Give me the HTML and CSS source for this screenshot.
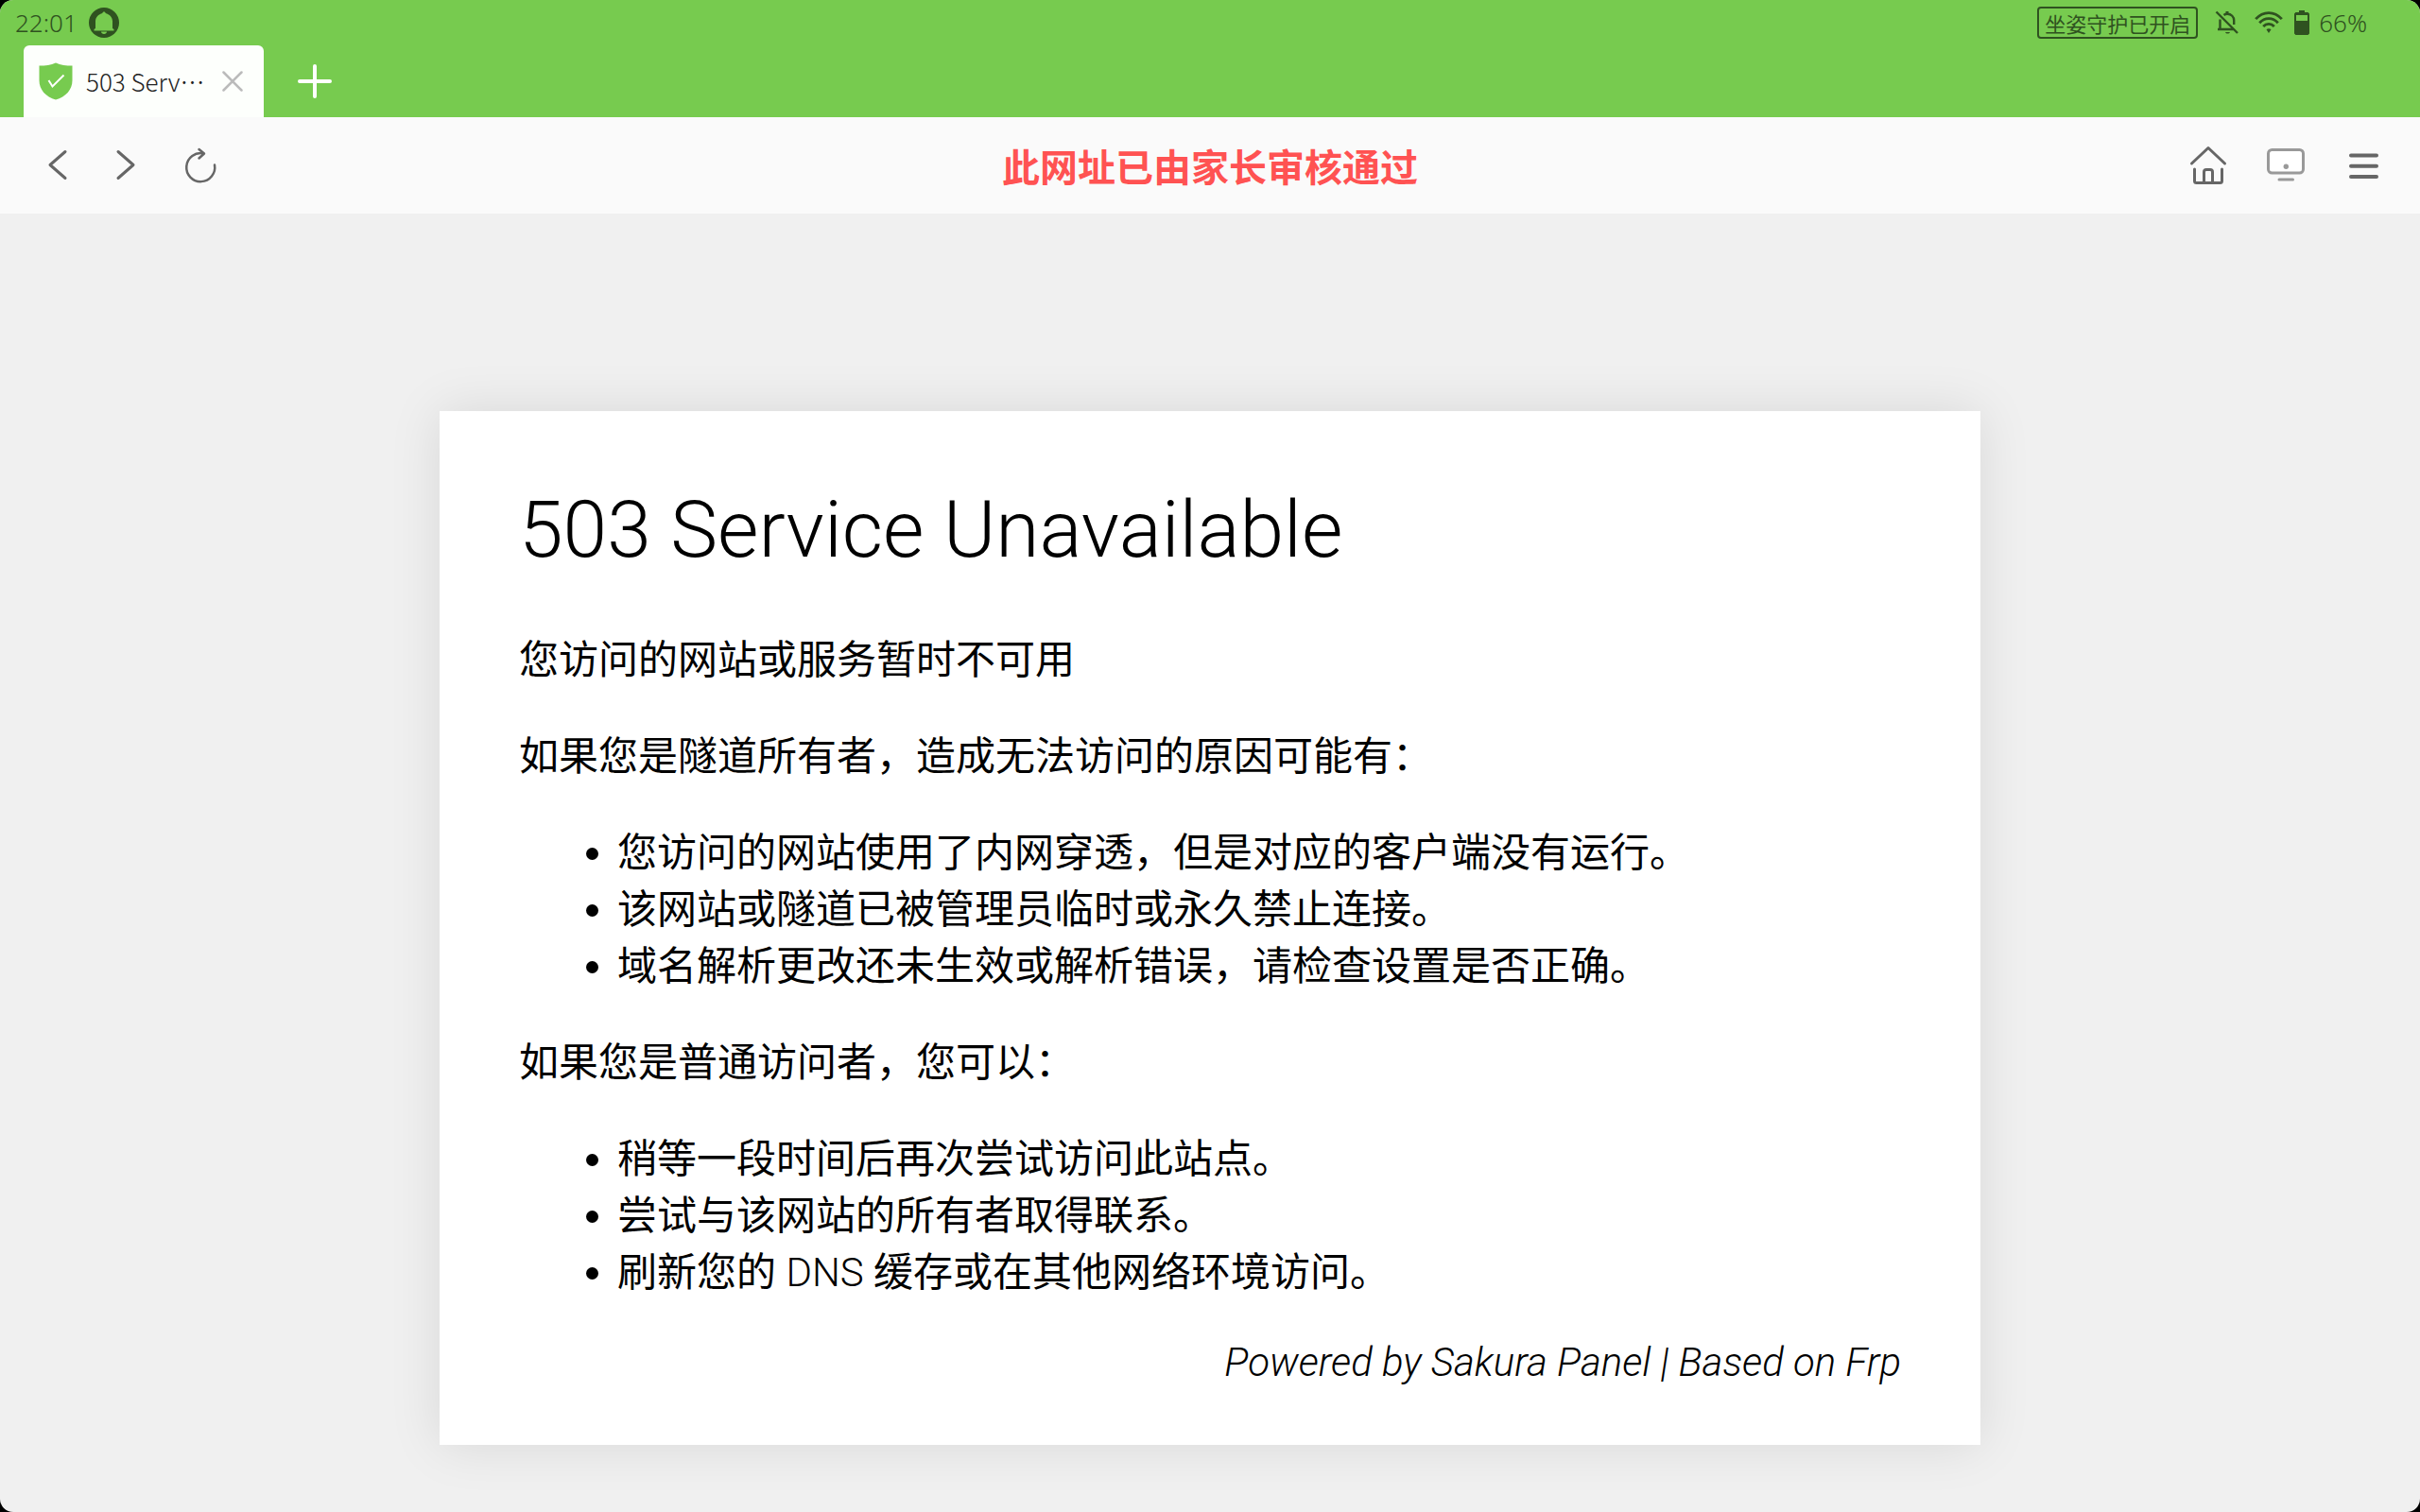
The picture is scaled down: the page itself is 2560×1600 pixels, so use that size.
FILE: index.html
```html
<!DOCTYPE html>
<html lang="zh-CN">
<head>
  <meta charset="UTF-8">
  <meta name="viewport" content="width=device-width, initial-scale=1.0">
  <title>503 Service Unavailable</title>
  <link rel="stylesheet" href="styles.css">
</head>
<body>
  <div class="screen">
    <!-- Status bar -->
    <div class="status-bar">
      <span class="time">22:01</span>
      <svg class="notice-icon" width="32" height="32" viewBox="0 0 32 32">
        <circle cx="16" cy="16" r="16" fill="#2f5220"/>
        <path d="M16 4.500c1 0 1.600.6 1.600 1.400 4.200 1 7.400 4.200 7.400 8.600v7.500l1.500 1V24.500h-21V23l1.500-1v-7.500c0-4.400 3.200-7.600 7.400-8.600 0-.8.6-1.400 1.600-1.400z" fill="#77cb4f"/>
        <path d="M13 25.500h6c0 1.500-1.300 2.500-3 2.500s-3-1-3-2.500z" fill="#77cb4f"/>
      </svg>
      <div class="status-right">
        <span class="guard">坐姿守护已开启</span>
        <svg class="mute-icon" width="26" height="26" viewBox="0 0 26 26" fill="none" stroke="#2f5220" stroke-width="2.400">
          <path d="M1.500 1.500L24 24M5.500 9.500V19.500M3 20h17M9.500 5c1-.8 2.300-1.200 3.700-1.200 4.200 0 7 3 7 6.800v4.500"/>
          <path d="M11.500 3.500V1h3v2.500zM11 23h5c-.5 1-1.300 1.500-2.500 1.500S11.500 24 11 23z" fill="#2f5220" stroke="none"/>
        </svg>
        <svg class="wifi-icon" width="30" height="24" viewBox="0 0 30 24" fill="none" stroke="#2f5220" stroke-width="2.800">
          <path d="M1.200 8.200C9-.7 21-.7 28.800 8.200M5.200 12.200c5.500-6.200 14.100-6.200 19.600 0M9.200 16c3.300-3.600 8.300-3.600 11.600 0"/>
          <path d="M12.500 19.200c1.400-1.400 3.600-1.400 5 0L15 23z" fill="#2f5220" stroke="none"/>
        </svg>
        <svg class="battery-icon" width="16" height="26" viewBox="0 0 16 26">
          <path d="M5 0h6v2h3.500L16 3.500V24.500L14.500 26h-13L0 24.500V3.500L1.500 2H5zM2 5v6h12V5z" fill="#2f5220" fill-rule="evenodd"/>
        </svg>
        <span>66%</span>
      </div>
    </div>

    <!-- Tabs -->
    <div class="tab-bar">
      <div class="tab">
        <svg width="36" height="40" viewBox="0 0 36 40">
          <path d="M.5 3.500C7 3.500 13 3 18 .5c5 2.500 11 3 17.500 3V19c0 10-7 17.500-17.500 20.500C7.500 36.500.5 29 .5 19z" fill="#77cb4f"/>
          <path d="M10.500 19l4 6.500L26.500 13.500" fill="none" stroke="#fff" stroke-width="2"/>
        </svg>
        <span class="tab-title">503 Serv…</span>
        <button class="close" aria-label="关闭标签页">
          <svg width="22" height="22" viewBox="0 0 22 22" fill="none" stroke="#bbb" stroke-width="2.500" stroke-linecap="round">
            <path d="M1.500 1.500l19 19M20.500 1.500l-19 19"/>
          </svg>
        </button>
      </div>
      <button class="new-tab" aria-label="新建标签页">
        <svg width="36" height="36" viewBox="0 0 36 36" fill="none" stroke="#fff" stroke-width="4" stroke-linecap="round">
          <path d="M18 2v32M2 18h32"/>
        </svg>
      </button>
    </div>

    <!-- Toolbar -->
    <div class="toolbar">
      <div class="nav">
        <button aria-label="后退">
          <svg class="icon" viewBox="0 0 48 48"><path d="M33 9.500L17 23.500l16 14"/></svg>
        </button>
        <button aria-label="前进">
          <svg class="icon" viewBox="0 0 48 48"><path d="M17 9.500l16 14-16 14"/></svg>
        </button>
        <button class="reload" aria-label="刷新">
          <svg class="icon thin" viewBox="0 0 48 48"><path d="M39 23.500A15 15 0 1 1 27.500 11.500M22.500 7l5.500 4.500-5.500 5"/></svg>
        </button>
      </div>
      <div class="address">此网址已由家长审核通过</div>
      <div class="actions">
        <button aria-label="主页">
          <svg class="icon" viewBox="0 0 48 48"><path d="M6.500 22L24 5.500 41.500 22M9.500 28v12.500q0 2 2 2h25q2 0 2-2V28M19.500 42V31q0-2.500 2.500-2.500h4q2.500 0 2.500 2.500v11"/></svg>
        </button>
        <button aria-label="电脑版">
          <svg class="icon desktop" viewBox="0 0 48 48">
            <rect x="5.500" y="7.500" width="37" height="24.500" rx="4" fill="#fff"/>
            <circle cx="24.300" cy="25.200" r="2.700" fill="#999" stroke="none"/>
            <path d="M17 39h14.500"/>
          </svg>
        </button>
        <button aria-label="菜单">
          <svg class="icon bold" viewBox="0 0 48 48"><path d="M11 13.500h27M11 24.700h27M11 36h27"/></svg>
        </button>
      </div>
    </div>

    <!-- Page -->
    <main class="page">
      <div class="card">
        <h1>503 Service Unavailable</h1>
        <p>您访问的网站或服务暂时不可用</p>
        <p>如果您是隧道所有者，造成无法访问的原因可能有：</p>
        <ul>
          <li>您访问的网站使用了内网穿透，但是对应的客户端没有运行。</li>
          <li>该网站或隧道已被管理员临时或永久禁止连接。</li>
          <li>域名解析更改还未生效或解析错误，请检查设置是否正确。</li>
        </ul>
        <p>如果您是普通访问者，您可以：</p>
        <ul>
          <li>稍等一段时间后再次尝试访问此站点。</li>
          <li>尝试与该网站的所有者取得联系。</li>
          <li>刷新您的 <span class="latin">DNS</span> 缓存或在其他网络环境访问。</li>
        </ul>
        <p class="powered">Powered by Sakura Panel | Based on Frp</p>
      </div>
    </main>
  </div>
</body>
</html>
```
FILE: styles.css
```css
* {
  box-sizing: border-box;
}

body {
  margin: 0;
  background-color: #000;
  font-family: Roboto, "Noto Sans CJK SC", sans-serif;
}

button {
  display: flex;
  padding: 0;
  border: none;
  background: none;
  cursor: pointer;
}

svg {
  display: block;
  flex-shrink: 0;
}

.screen {
  min-height: 100vh;
  display: flex;
  flex-direction: column;
  background-color: #f0f0f0;
  border-radius: 14px;
  overflow: hidden;
}

/* Status bar */
.status-bar {
  display: flex;
  align-items: center;
  height: 48px;
  padding: 0 56px 0 16px;
  background-color: #77cb4f;
  color: #2f5220;
  font-family: "Noto Sans", "Noto Sans CJK SC", sans-serif;
  font-size: 26px;
  font-weight: 300;
  line-height: 48px;
}

.notice-icon {
  margin-left: 12px;
}

.status-right {
  display: flex;
  align-items: center;
  margin-left: auto;
}

.guard {
  padding: 0 6px;
  border: 2px solid #2f5220;
  border-radius: 4px;
  font-family: "Noto Sans CJK SC", sans-serif;
  font-size: 22px;
  font-weight: 400;
  line-height: 30px;
}

.mute-icon {
  margin-left: 18px;
}

.wifi-icon {
  margin-left: 16px;
}

.battery-icon {
  margin: 0 10px 0 12px;
}

/* Tabs */
.tab-bar {
  display: flex;
  align-items: stretch;
  height: 76px;
  padding-left: 25px;
  background-color: #77cb4f;
}

.tab {
  display: flex;
  align-items: center;
  width: 254px;
  padding: 0 22px 0 16px;
  background-color: #fdfffc;
  border-radius: 6px 6px 0 0;
}

.tab-title {
  margin-left: 14px;
  padding-bottom: 2px;
  color: #222;
  font-family: "Noto Sans CJK SC", sans-serif;
  font-size: 26px;
  font-weight: 300;
  white-space: nowrap;
}

.close {
  margin-left: auto;
}

.new-tab {
  align-items: center;
  margin-left: 36px;
}

/* Toolbar */
.toolbar {
  display: grid;
  grid-template-columns: 1fr auto 1fr;
  align-items: center;
  height: 102px;
  padding: 0 36px;
  background-color: #fafafa;
}

.nav {
  display: flex;
  gap: 24px;
}

.reload {
  margin-left: 8px;
}

.actions {
  display: flex;
  justify-content: flex-end;
  gap: 34px;
}

.icon {
  width: 48px;
  height: 48px;
  fill: none;
  stroke: #666;
  stroke-width: 3;
  stroke-linecap: round;
  stroke-linejoin: round;
}

.icon.thin {
  stroke-width: 2.5;
}

.icon.bold {
  stroke-width: 4;
}

.icon.desktop {
  stroke: #999;
}

.address {
  color: #ff5252;
  font-size: 40px;
  font-weight: 700;
}

/* Error card */
.page {
  flex: 1;
  padding: 209px 42px 70px;
}

.card {
  max-width: 1630px;
  margin: 0 auto;
  padding: 77px 84px 64px;
  background-color: #fff;
  box-shadow: 0 0 52px rgba(0, 0, 0, 0.1);
  color: #000;
  font-size: 42px;
  line-height: 60px;
}

.card h1 {
  margin: 0 0 59px;
  font-size: 84px;
  font-weight: 300;
  line-height: 98px;
}

.card p,
.card ul {
  margin: 0 0 42px;
}

.card ul {
  padding-left: 104px;
}

.latin {
  font-weight: 300;
}

.card .powered {
  margin: 0;
  font-style: italic;
  font-weight: 300;
  line-height: 46px;
  text-align: right;
}
```
